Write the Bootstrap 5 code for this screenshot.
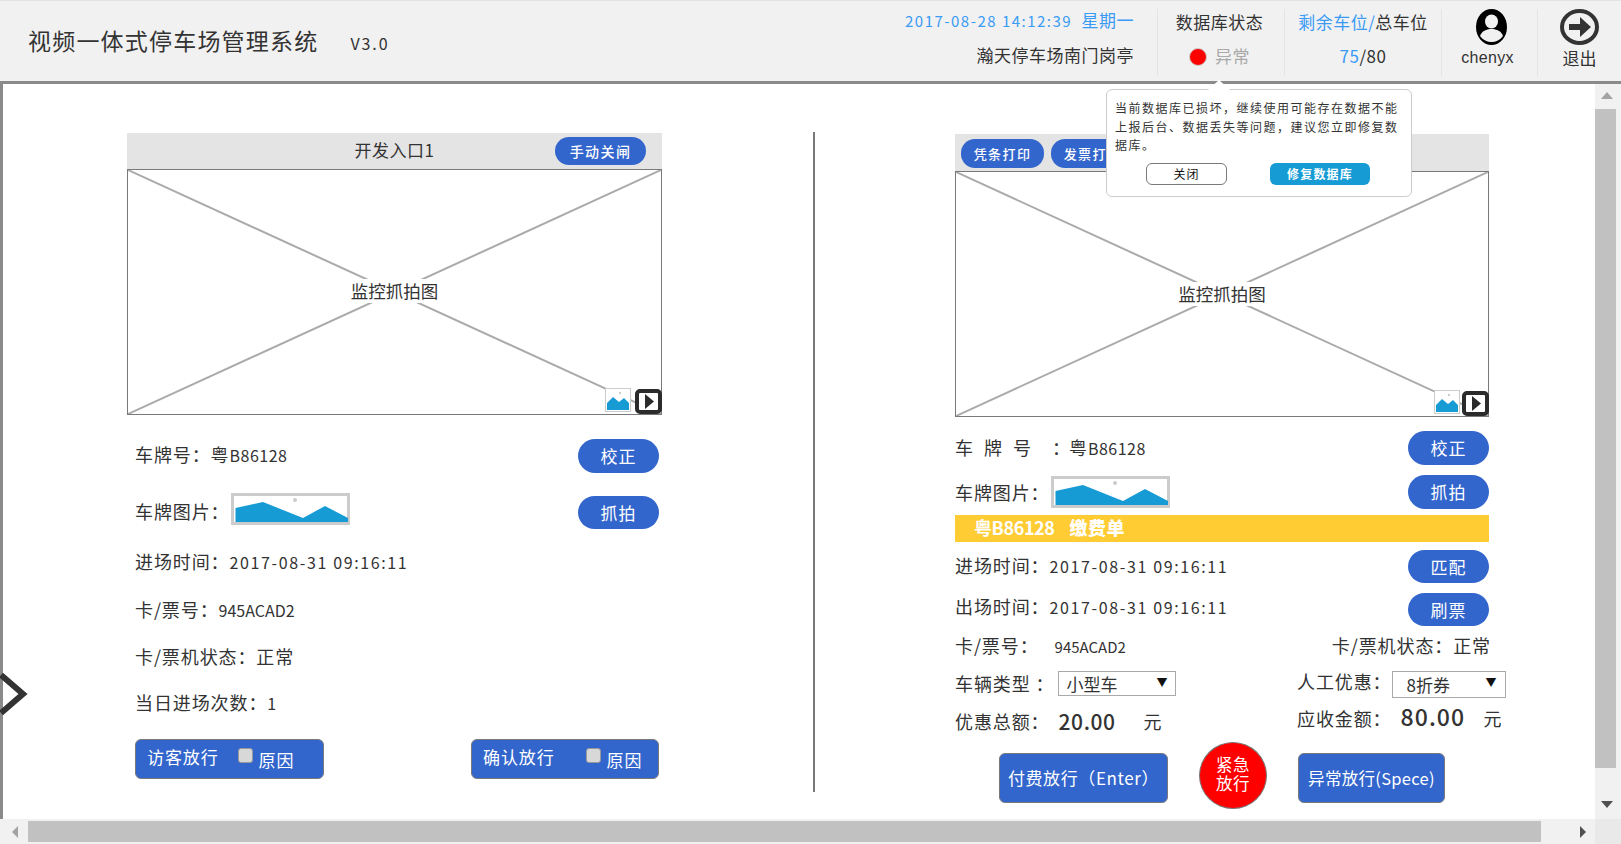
<!DOCTYPE html>
<html lang="zh-CN">
<head>
<meta charset="utf-8">
<title>视频一体式停车场管理系统</title>
<link href="https://cdn.jsdelivr.net/npm/bootstrap@5.3.0/dist/css/bootstrap.min.css" rel="stylesheet">
<style>
html,body{height:844px;overflow:hidden;}
body{position:relative;width:1621px;font-family:"Noto Sans CJK SC","Liberation Sans",sans-serif;color:#333;background:#fff;font-size:18px;letter-spacing:.9px;line-height:24px;}
.num{font-size:16px;letter-spacing:1.63px;}
.num-code{font-size:16px;letter-spacing:.5px;}
.num-card{font-size:16px;letter-spacing:0;}
.num-card-sm{font-size:15px;letter-spacing:0;}
.top-bar{height:84px;background:#f1f1f1;border-top:1px solid #e4e4e4;border-bottom:3px solid #8a8a8a;}
.sys-title{margin-left:28px;margin-top:22px;font-size:23px;letter-spacing:1.2px;line-height:34px;}
.sys-ver{margin-left:32px;font-size:16px;letter-spacing:1.9px;}
.head-cell{height:67px;margin-top:8px;border-left:1px solid #e4e4e4;font-size:17px;letter-spacing:.5px;line-height:28px;}
.head-cell .line2{margin-top:6px;}
.c-time{padding-right:23px;border-left:0;text-align:right;}
.c-time>div{position:relative;top:-3px;}
.c-time .num{font-size:15px;letter-spacing:1.5px;margin-right:5px;}
.c-db{width:127px;text-align:center;padding-right:3px;}
.c-slot{width:157px;text-align:center;}
.c-db>div,.c-slot>div{position:relative;top:-1px;}
.c-user{width:96px;}
.c-exit{width:84px;}
.blue-txt{color:#3a9bf5;}
.dot-red{display:inline-block;width:18px;height:18px;border-radius:50%;background:#f00;border:1px solid #ccc;vertical-align:-3px;margin-right:8px;}
.mute-txt{color:#aaa;}
.glyph-top{height:36px;margin-top:0;display:block;}
.user-name{font-family:"Liberation Sans",sans-serif;font-size:16px;letter-spacing:.3px;line-height:24px;margin-top:1px;margin-right:4px;}
.exit-name{font-size:17px;line-height:24px;margin-top:1px;letter-spacing:0;}
.middle{height:735px;}
.main-area{width:1595px;border-left:3px solid #8a8a8a;padding:49px 0 0 124px;}
.lane-left{width:535px;}
.split-line{width:2px;height:660px;background:#797979;margin:-1px 140px 0 151px;}
.lane-right{width:535px;margin-top:1px;}
.lane-head{height:36px;background:#e4e4e4;position:relative;padding:0 6px;font-size:17px;letter-spacing:.5px;}
.lane-right .lane-head{height:37px;}
.lane-name{position:absolute;left:0;right:0;top:5px;text-align:center;}
.chip-btn{height:28px;width:91px;border:0;border-radius:14px;background:#36c;color:#fff;font-size:14px;letter-spacing:1.4px;padding:0;font-weight:500;line-height:24px;}
.chip-close{position:absolute;right:16px;top:4px;}
.lane-right .chip-btn{width:83px;height:29px;margin-top:5px;font-size:13px;margin-right:7px;line-height:25px;}
.snap-box{position:relative;height:246px;border:1px solid #797979;background:#fff;}
.snap-lines{position:absolute;inset:0;width:100%;height:100%;}
.snap-label{position:absolute;left:50%;top:50%;transform:translate(-50%,-50%);background:#fff;padding:0 2px;font-size:17.5px;letter-spacing:0;white-space:nowrap;}
.lane-left .snap-label{top:49.6%;}
.thumb-mini{position:absolute;right:30px;bottom:2px;width:26px;height:24px;}
.lane-right .thumb-mini{right:28px;}
.play-mini{position:absolute;right:-1px;bottom:0;width:27px;height:25px;}
.w-row{height:34px;}
.pill-btn{width:81px;height:34px;border:0;border-radius:17px;background:#36c;color:#fff;font-size:17px;letter-spacing:1px;padding:0;line-height:30px;}
.l-inner{padding:0 3px 0 8px;}
.l-r1{margin-top:24px;}
.l-r1>div{margin-top:-4px;}
.l-r2{margin-top:20px;height:36px;}
.plate-pic{width:119px;height:32px;display:block;}
.plate-lbl{margin-right:1px;}
.l-r3{margin-top:20px;height:24px;}
.l-r4,.l-r5{margin-top:24px;height:24px;}
.l-r5{margin-top:23px;}
.l-r6{margin-top:22px;height:24px;}
.l-r7{margin-top:25px;padding:0 3px 0 8px;}
.release-btn{height:40px;border:1px solid #797979;border-radius:6px;background:#36c;color:#fff;font-size:17px;letter-spacing:.9px;text-align:left;padding:0 0 0 11px;display:flex;}
.rb-1{width:189px;}
.rb-2{width:188px;margin-left:147px;}
.rb-txt{margin-top:5px;}
.rb-check.form-check-input{width:15px;height:15px;margin:8px 6px 0 19px;background-color:#d8d8d8;border:1px solid #999;border-radius:3px;float:none;}
.rb-2 .rb-check.form-check-input{margin-left:31px;}
.rb-why{margin-top:8px;}
.r-r1{margin-top:14px;}
.r-r1>div{margin-top:-2px;}
.r-r2{margin-top:10px;}
.spaced span{display:inline-block;}
.s-a{width:29px;}.s-b{width:39px;}.s-c{width:17px;}
.pay-strip{height:27px;margin-top:6px;background:#fc3;color:#fff;font-weight:700;padding-left:19px;font-size:18px;letter-spacing:-.4px;line-height:25px;width:534px;}
.pay-strip b{margin-left:15px;letter-spacing:.5px;}
.r-r3{margin-top:8px;height:33px;}
.r-r4{margin-top:10px;height:33px;}
.r-r3 .pill-btn,.r-r4 .pill-btn{height:33px;}
.r-r3>div{margin-top:-2px;}
.r-r4>div{margin-top:-6px;}
.r-box{width:534px;}
.r-r5{margin-top:7px;height:24px;width:536px;}
.r-r6{margin-top:14px;height:27px;width:551px;}
.sel-wrap{position:relative;display:block;height:25px;}
.sel-a{width:118px;margin-left:4px;}
.sel-b{width:114px;height:27px;}
.sel-native.form-select{width:100%;height:100%;padding:0 0 0 7px;border:1px solid #aaa;border-radius:0;background-image:none;background-color:#fff;color:#333;font-size:17px;letter-spacing:0;line-height:23px;}
.sel-b .sel-native.form-select{padding-left:14px;}
.sel-arrow{position:absolute;right:9px;top:0;font-size:11px;color:#111;letter-spacing:0;pointer-events:none;line-height:22px;}
.r-col-b{width:209px;}
.r-col-b .lbl-up{margin-top:-2px;}
.r-r7{margin-top:8px;height:30px;width:551px;}
.r-r7 .sum-l{margin-top:3px;}
.sum-a{font-size:21px;letter-spacing:.6px;margin-left:9px;width:85px;font-weight:500;}
.sum-b{font-size:23px;letter-spacing:1.1px;margin-left:9px;width:75px;margin-top:-2px;font-weight:500;}
.r-r8{margin-top:6px;height:67px;padding-left:44px;}
.act-btn{height:50px;margin-top:11px;border:1px solid #797979;border-radius:6px;background:#36c;color:#fff;font-size:17px;letter-spacing:.6px;padding:0;line-height:44px;}
.act-a{width:169px;}
.act-b{width:147px;font-size:16.5px;letter-spacing:.3px;}
.sos-btn{width:68px;height:67px;border:1px solid #797979;border-radius:50%;background:#f00;color:#fff;font-size:16.5px;letter-spacing:.5px;line-height:19px;padding:0 0 3px;margin:0 31px;}
.v-track{width:26px;background:#f1f1f1;position:relative;}
.v-thumb{height:659px;width:21px;margin-top:25px;background:#c1c1c1;}
.arr-up{position:absolute;left:5px;top:8px;}
.arr-dn{position:absolute;left:5px;bottom:10px;}
.h-track{height:25px;margin-left:0;background:#f1f1f1;padding:2px 0 1px 28px;position:relative;}
.h-thumb{width:1513px;height:21px;background:#c1c1c1;}
.arr-lf{position:absolute;left:11px;top:7px;}
.arr-rt{position:absolute;left:1579px;top:7px;}
.h-corner{position:absolute;left:1595px;top:0;width:26px;height:25px;background:#e9e9e9;}
.side-chev{position:absolute;left:-3px;top:672px;width:32px;height:44px;}
.db-pop.popover{position:absolute;left:1106px;top:89px;width:306px;height:108px;max-width:none;border:1px solid #ccc;border-radius:6px;font-family:"Noto Sans CJK SC",sans-serif;letter-spacing:1.5px;font-size:12px;box-shadow:none;}
.db-pop .popover-body{padding:9px 8px 0;font-size:12px;line-height:18.7px;color:#333;}
.pop-tip{position:absolute;left:101px;top:-10px;width:0;height:0;border-left:11px solid transparent;border-right:11px solid transparent;border-bottom:10px solid #fff;}
.pop-btns{margin-top:8px;padding-left:31px;}
.pop-close{width:81px;height:22px;border:1px solid #797979;border-radius:6px;background:#fff;color:#111;font-size:12px;line-height:20px;padding:0;letter-spacing:1px;}
.pop-fix{width:100px;height:22px;border:0;border-radius:6px;background:#169bd5;color:#fff;font-size:12px;font-weight:700;line-height:22px;padding:0;margin-left:43px;letter-spacing:1.2px;}
</style>
</head>
<body>
<header class="top-bar d-flex">
  <div class="sys-title text-nowrap">视频一体式停车场管理系统<span class="sys-ver">V3.0</span></div>
  <div class="ms-auto d-flex">
    <div class="head-cell c-time">
      <div class="blue-txt"><span class="num">2017-08-28 14:12:39</span>&nbsp;星期一</div>
      <div class="line2">瀚天停车场南门岗亭</div>
    </div>
    <div class="head-cell c-db">
      <div>数据库状态</div>
      <div class="line2"><span class="dot-red"></span><span class="mute-txt">异常</span></div>
    </div>
    <div class="head-cell c-slot">
      <div><span class="blue-txt">剩余车位/</span>总车位</div>
      <div class="line2"><span class="blue-txt">75</span>/80</div>
    </div>
    <div class="head-cell c-user d-flex flex-column align-items-center">
      <svg class="glyph-top ms-1" width="31" height="36" viewBox="0 0 31 36"><ellipse cx="15.5" cy="18" rx="15.5" ry="18" fill="#000"/><ellipse cx="15.5" cy="12.5" rx="6.5" ry="7" fill="#f1f1f1"/><path d="M4 27c2-5 6-7 11.500-7s9.500 2 11.500 7c-3 4-7 6-11.500 6S7 31 4 27z" fill="#f1f1f1"/></svg>
      <div class="user-name">chenyx</div>
    </div>
    <div class="head-cell c-exit d-flex flex-column align-items-center">
      <svg class="glyph-top" width="39" height="36" viewBox="0 0 39 36"><ellipse cx="19.500" cy="18" rx="17.500" ry="16" fill="none" stroke="#333" stroke-width="4"/><path d="M9 15h11V8l11 10-11 10v-7H9z" fill="#333"/></svg>
      <div class="exit-name">退出</div>
    </div>
  </div>
</header>

<div class="middle d-flex">
  <main class="main-area d-flex">
    <section class="lane-left flex-shrink-0">
      <div class="lane-head">
        <div class="lane-name">开发入口1</div>
        <button type="button" class="chip-btn chip-close">手动关闸</button>
      </div>
      <div class="snap-box">
        <svg class="snap-lines" viewBox="0 0 100 100" preserveAspectRatio="none"><line x1="0" y1="0" x2="100" y2="100" stroke="#aaa" stroke-width="2" vector-effect="non-scaling-stroke"/><line x1="100" y1="0" x2="0" y2="100" stroke="#aaa" stroke-width="2" vector-effect="non-scaling-stroke"/></svg>
        <div class="snap-label">监控抓拍图</div>
        <svg class="thumb-mini" viewBox="0 0 26 24"><rect x=".5" y=".5" width="25" height="23" fill="#fff" stroke="#ccc"/><path d="M2 15l6-6 6 5 5-4 5 5v7H2z" fill="#169bd5"/><circle cx="15" cy="5" r="1.200" fill="#ccc"/></svg>
        <svg class="play-mini" viewBox="0 0 27 25"><rect x="2" y="2" width="23" height="21" rx="3" fill="#fff" stroke="#2b2b2b" stroke-width="4"/><path d="M10 5l9 7.500L10 20z" fill="#2b2b2b"/></svg>
      </div>
      <div class="l-inner w-row l-r1 d-flex justify-content-between align-items-center">
        <div>车牌号：粤<span class="num-code">B86128</span></div>
        <button type="button" class="pill-btn m-0">校正</button>
      </div>
      <div class="l-inner l-r2 d-flex align-items-center">
        <div class="plate-lbl">车牌图片：</div>
        <svg class="plate-pic align-self-start" viewBox="0 0 119 32"><rect x="1.500" y="1.500" width="116" height="29" fill="#fff" stroke="#ccc" stroke-width="3"/><path d="M4.500 15L32 9l40 16 22-12 23 12v4H4.500z" fill="#169bd5"/><circle cx="64" cy="7" r="2" fill="#ccc"/></svg>
        <button type="button" class="pill-btn ms-auto align-self-end" style="height:33px">抓拍</button>
      </div>
      <div class="l-inner l-r3">进场时间：<span class="num">2017-08-31 09:16:11</span></div>
      <div class="l-inner l-r4">卡/票号：<span class="num-card">945ACAD2</span></div>
      <div class="l-inner l-r5">卡/票机状态：正常</div>
      <div class="l-inner l-r6">当日进场次数：<span class="num">1</span></div>
      <div class="l-r7 d-flex">
        <div class="release-btn rb-1"><span class="rb-txt">访客放行</span><input class="form-check-input rb-check" type="checkbox" aria-label="原因"><span class="rb-why">原因</span></div>
        <div class="release-btn rb-2"><span class="rb-txt">确认放行</span><input class="form-check-input rb-check" type="checkbox" aria-label="原因"><span class="rb-why">原因</span></div>
      </div>
    </section>

    <div class="split-line flex-shrink-0"></div>

    <section class="lane-right flex-shrink-0">
      <div class="lane-head r-box">
        <button type="button" class="chip-btn">凭条打印</button><button type="button" class="chip-btn">发票打印</button>
      </div>
      <div class="snap-box r-box">
        <svg class="snap-lines" viewBox="0 0 100 100" preserveAspectRatio="none"><line x1="0" y1="0" x2="100" y2="100" stroke="#aaa" stroke-width="2" vector-effect="non-scaling-stroke"/><line x1="100" y1="0" x2="0" y2="100" stroke="#aaa" stroke-width="2" vector-effect="non-scaling-stroke"/></svg>
        <div class="snap-label">监控抓拍图</div>
        <svg class="thumb-mini" viewBox="0 0 26 24"><rect x=".5" y=".5" width="25" height="23" fill="#fff" stroke="#ccc"/><path d="M2 15l6-6 6 5 5-4 5 5v7H2z" fill="#169bd5"/><circle cx="15" cy="5" r="1.200" fill="#ccc"/></svg>
        <svg class="play-mini" viewBox="0 0 27 25"><rect x="2" y="2" width="23" height="21" rx="3" fill="#fff" stroke="#2b2b2b" stroke-width="4"/><path d="M10 5l9 7.500L10 20z" fill="#2b2b2b"/></svg>
      </div>
      <div class="r-box w-row r-r1 d-flex justify-content-between align-items-center">
        <div class="spaced text-nowrap"><span class="s-a">车</span><span class="s-a">牌</span><span class="s-b">号</span><span class="s-c">：</span>粤<span class="num-code">B86128</span></div>
        <button type="button" class="pill-btn m-0">校正</button>
      </div>
      <div class="r-box w-row r-r2 d-flex align-items-center">
        <div class="plate-lbl">车牌图片：</div>
        <svg class="plate-pic" viewBox="0 0 119 32"><rect x="1.500" y="1.500" width="116" height="29" fill="#fff" stroke="#ccc" stroke-width="3"/><path d="M4.500 15L32 9l40 16 22-12 23 12v4H4.500z" fill="#169bd5"/><circle cx="64" cy="7" r="2" fill="#ccc"/></svg>
        <button type="button" class="pill-btn ms-auto">抓拍</button>
      </div>
      <div class="pay-strip">粤B86128<b>缴费单</b></div>
      <div class="r-box r-r3 d-flex justify-content-between align-items-center">
        <div>进场时间：<span class="num">2017-08-31 09:16:11</span></div>
        <button type="button" class="pill-btn m-0">匹配</button>
      </div>
      <div class="r-box r-r4 d-flex justify-content-between align-items-center">
        <div>出场时间：<span class="num">2017-08-31 09:16:11</span></div>
        <button type="button" class="pill-btn m-0">刷票</button>
      </div>
      <div class="r-r5 d-flex justify-content-between">
        <div>卡/票号：<span class="num-card-sm ms-3">945ACAD2</span></div>
        <div>卡/票机状态：正常</div>
      </div>
      <div class="r-r6 d-flex justify-content-between">
        <div class="d-flex"><span>车辆类型&nbsp;：</span>
          <label class="sel-wrap sel-a"><select class="form-select sel-native" aria-label="车辆类型"><option>小型车</option></select><span class="sel-arrow">▼</span></label>
        </div>
        <div class="d-flex r-col-b"><span class="text-nowrap lbl-up">人工优惠：</span>
          <label class="sel-wrap sel-b"><select class="form-select sel-native" aria-label="人工优惠"><option>8折券</option></select><span class="sel-arrow">▼</span></label>
        </div>
      </div>
      <div class="r-r7 d-flex justify-content-between">
        <div class="d-flex sum-l"><span>优惠总额：</span><span class="sum-a">20.00</span><span>元</span></div>
        <div class="d-flex r-col-b"><span class="text-nowrap">应收金额：</span><span class="sum-b">80.00</span><span class="ms-2">元</span></div>
      </div>
      <div class="r-r8 d-flex">
        <button type="button" class="act-btn act-a">付费放行（Enter）</button>
        <button type="button" class="sos-btn">紧急<br>放行</button>
        <button type="button" class="act-btn act-b text-nowrap">异常放行(Spece)</button>
      </div>
    </section>
  </main>
  <div class="v-track flex-shrink-0">
    <svg class="arr-up" width="14" height="8"><path d="M7 0l6 7H1z" fill="#a3a3a3"/></svg>
    <div class="v-thumb"></div>
    <svg class="arr-dn" width="14" height="8"><path d="M1 0h12L7 7z" fill="#505050"/></svg>
  </div>
</div>
<div class="h-track">
  <svg class="arr-lf" width="8" height="12"><path d="M7 0v12L1 6z" fill="#a3a3a3"/></svg>
  <div class="h-thumb"></div>
  <svg class="arr-rt" width="8" height="12"><path d="M1 0l6 6-6 6z" fill="#505050"/></svg>
  <div class="h-corner"></div>
</div>

<svg class="side-chev" viewBox="0 0 32 44"><path d="M4 3l22 19L4 41" fill="none" stroke="#333" stroke-width="6"/></svg>

<div class="popover db-pop" role="tooltip">
  <div class="pop-tip"></div>
  <div class="popover-body">当前数据库已损坏，继续使用可能存在数据不能上报后台、数据丢失等问题，建议您立即修复数据库。
    <div class="pop-btns d-flex"><button type="button" class="pop-close">关闭</button><button type="button" class="pop-fix">修复数据库</button></div>
  </div>
</div>
<script src="https://cdn.jsdelivr.net/npm/bootstrap@5.3.0/dist/js/bootstrap.bundle.min.js"></script>
</body>
</html>
